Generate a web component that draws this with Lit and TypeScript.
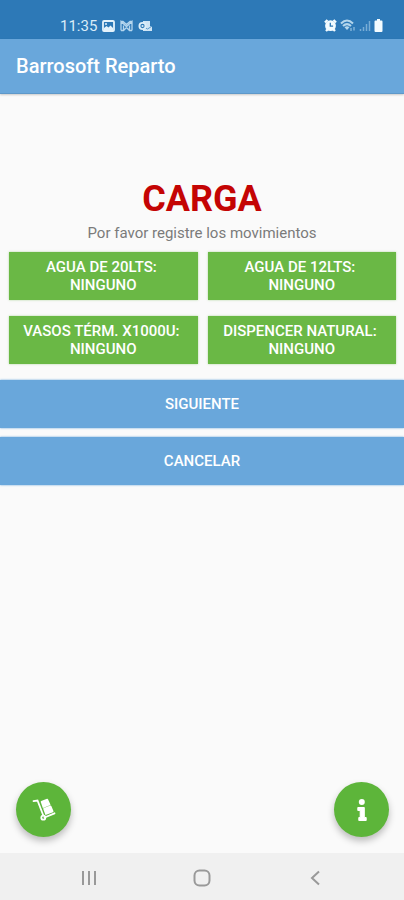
import { LitElement, html, css } from "lit";
import { customElement, state } from "lit/decorators.js";

interface Product {
  name: string;
  amount: string;
}

@customElement("status-bar")
class StatusBar extends LitElement {
  static styles = css`
    :host {
      display: flex;
      justify-content: space-between;
      align-items: center;
      box-sizing: border-box;
      height: 39px;
      padding: 12px 21px 0 60px;
      background: #2d79b7;
      color: #d9ecf8;
      font: 400 15px/20px Roboto, sans-serif;
    }
    .group {
      display: flex;
      align-items: center;
      gap: 5px;
    }
    .tight {
      gap: 3px;
    }
    svg {
      display: block;
    }
  `;

  render() {
    return html`
      <div class="group">
        <time>11:35</time>
        <svg width="13" height="12" viewBox="0 0 13 12" aria-hidden="true">
          <rect x="1" y="1" width="11" height="10" rx="1" fill="none" stroke="#e4f2fb" stroke-width="1.8" />
          <path d="M2 10V8l2.500-2 2 1.500 2-2L11 8v2z" fill="#e4f2fb" />
          <circle cx="4" cy="4" r="1" fill="#e4f2fb" />
        </svg>
        <svg width="13" height="12" viewBox="0 0 13 12" aria-hidden="true">
          <path d="M1 10.500V1.500L6.500 6.500 12 1.500v9M3.500 10.500V5.500M9.500 10.500V5.500M1 10.500h2.500l3-3 3 3H12M1 1.500h2l3.500 3 3.500-3h2"
            fill="none" stroke="#b5d6ee" stroke-width="1.300" />
        </svg>
        <svg width="14" height="12" viewBox="0 0 14 12" aria-hidden="true">
          <path d="M5 1h7v5l2 1v4H5z" fill="#cfe5f5" />
          <path d="M5 6.500l4.500 2.500 4-2.500" fill="none" stroke="#5a9acb" />
          <circle cx="4.500" cy="6" r="4" fill="#dceef9" />
          <circle cx="4.500" cy="6" r="1.600" fill="none" stroke="#2d79b7" stroke-width="1.100" />
        </svg>
      </div>
      <div class="group tight">
        <svg width="13" height="13" viewBox="0 0 13 13" aria-hidden="true">
          <path d="M1 3.500L3.500 1M12 3.500L9.500 1M2 12l2-2M11 12L9 10" stroke="#f2fbff" stroke-width="2.400" />
          <circle cx="6.500" cy="6.700" r="5.400" fill="#f2fbff" />
          <path d="M6.300 3.800v3.400h2.800" fill="none" stroke="#2d79b7" stroke-width="1.300" />
        </svg>
        <svg width="16" height="13" viewBox="0 0 16 13" aria-hidden="true">
          <path d="M1 4.500Q7 -1.500 13 4.500M3 7Q7 3.200 11 7" fill="none" stroke="#b4d6ec" stroke-width="2" />
          <path d="M4.500 8.200Q7 6.200 9.500 8.200L7 11z" fill="#b4d6ec" />
          <path d="M11 9v3M14 8v3.500" stroke="#7fb3d9" stroke-width="1.500" />
        </svg>
        <svg width="12" height="13" viewBox="0 0 12 13" aria-hidden="true">
          <path d="M1.500 10v2M4.500 8v4M7.500 5v7M10.500 2v10" stroke="#78add5" stroke-width="1.500" />
        </svg>
        <svg width="9" height="13" viewBox="0 0 9 13" aria-hidden="true">
          <path d="M3 0h3v1.500h1.500a1 1 0 0 1 1 1V12a1 1 0 0 1-1 1h-6a1 1 0 0 1-1-1V2.500a1 1 0 0 1 1-1H3z" fill="#f4fcff" />
        </svg>
      </div>
    `;
  }
}

@customElement("system-nav")
class SystemNav extends LitElement {
  static styles = css`
    :host {
      display: grid;
      grid-template-columns: repeat(3, 113px);
      justify-content: center;
      align-items: center;
      height: 47px;
      background: #f0f0f0;
    }
    button {
      display: flex;
      justify-content: center;
      align-items: center;
      height: 47px;
      padding: 2px 0 0;
      border: 0;
      background: none;
      color: #999;
    }
    svg {
      fill: none;
      stroke: currentColor;
      stroke-width: 2;
    }
  `;

  render() {
    return html`
      <button aria-label="Recientes">
        <svg width="18" height="18" viewBox="0 0 18 18"><path d="M3 2v14M9 2v14M15 2v14" /></svg>
      </button>
      <button aria-label="Inicio">
        <svg width="18" height="18" viewBox="0 0 18 18"><rect x="1.500" y="1.500" width="15" height="15" rx="5" /></svg>
      </button>
      <button aria-label="Atrás">
        <svg width="18" height="18" viewBox="0 0 18 18"><path d="M13 2.500L6 9l7 6.500" /></svg>
      </button>
    `;
  }
}

@customElement("app-root")
class AppRoot extends LitElement {
  static styles = css`
    :host {
      display: flex;
      flex-direction: column;
      min-height: 100vh;
      background: #fafafa;
      font-family: Roboto, sans-serif;
    }
    .app-bar {
      display: flex;
      align-items: center;
      box-sizing: border-box;
      height: 55px;
      padding: 0 16px;
      background: #69a7db;
      border-bottom: 1px solid #5e98c9;
      box-shadow: 0 1px 2px #0003;
      color: #fff;
      font-size: 20px;
      font-weight: 500;
    }
    main {
      display: flex;
      flex: 1;
      flex-direction: column;
      padding-top: 84px;
    }
    h1 {
      margin: 0;
      color: #c40404;
      font-size: 36px;
      font-weight: 700;
      line-height: 42px;
      text-align: center;
    }
    .hint {
      margin: 4px 0 10px;
      color: #7b7b7b;
      font-size: 15px;
      line-height: 18px;
      text-align: center;
    }
    .products {
      display: grid;
      grid-template-columns: 1fr 1fr;
      gap: 16px 10px;
      padding: 0 8px 0 9px;
    }
    .product,
    .action {
      min-height: 48px;
      padding: 0;
      border: 0;
      border-radius: 0;
      color: #fff;
      font: 500 15px/18px Roboto, sans-serif;
      text-transform: uppercase;
    }
    .product {
      background: #6ab845;
      box-shadow: 0 0 2px #6ab84580;
    }
    .product span {
      display: block;
      white-space: pre;
    }
    .actions {
      display: grid;
      gap: 9px;
      margin-top: 16px;
    }
    .action {
      background: #69a7db;
      box-shadow: 0 0 2px #69a7db;
    }
    .floating {
      display: flex;
      justify-content: space-between;
      margin-top: auto;
      padding: 16px 15px 16px 16px;
    }
    .fab {
      display: grid;
      place-items: center;
      width: 55px;
      height: 55px;
      padding: 0;
      border: 0;
      border-radius: 50%;
      background: #5db53a;
      box-shadow: 0 4px 7px #00000040;
      color: #fff;
    }
  `;

  @state() private products: Product[] = [
    { name: "Agua de 20lts", amount: "Ninguno" },
    { name: "Agua de 12lts", amount: "Ninguno" },
    { name: "Vasos térm. x1000u", amount: "Ninguno" },
    { name: "Dispencer natural", amount: "Ninguno" },
  ];

  render() {
    return html`
      <status-bar></status-bar>
      <header class="app-bar">Barrosoft Reparto</header>
      <main>
        <h1>CARGA</h1>
        <p class="hint">Por favor registre los movimientos</p>
        <div class="products">
          ${this.products.map(
            (p) => html`<button class="product"><span>${p.name}: </span><span>${p.amount}</span></button>`
          )}
        </div>
        <div class="actions">
          <button class="action">Siguiente</button>
          <button class="action">Cancelar</button>
        </div>
        <div class="floating">
          <button class="fab" aria-label="Carga">
            <svg width="26" height="26" viewBox="0 0 26 26" fill="none" stroke="currentColor">
              <path d="M2.500 4.200L6.500 3.500 12.300 18.500M13.500 20.500L23.500 16.300" stroke-width="1.800" stroke-linecap="round" />
              <circle cx="12.300" cy="20.700" r="2" stroke-width="1.800" />
              <path d="M10.500 4.800L16.300 2.500 18.600 7.500 12.300 10.100zM13 11.800L19.600 9.300 21.700 14.400 15 17.100z"
                fill="currentColor" stroke-width="1.600" stroke-linejoin="round" />
            </svg>
          </button>
          <button class="fab" aria-label="Información">
            <svg width="12" height="24" viewBox="0 0 12 24" fill="currentColor">
              <circle cx="5.800" cy="4" r="3" />
              <path d="M1.800 9.500H8.300V19.500H10.200V22.500H2.800V19.500H4.200V12.500H1.800z" stroke="currentColor" stroke-width="1" stroke-linejoin="round" />
            </svg>
          </button>
        </div>
      </main>
      <system-nav></system-nav>
    `;
  }
}
